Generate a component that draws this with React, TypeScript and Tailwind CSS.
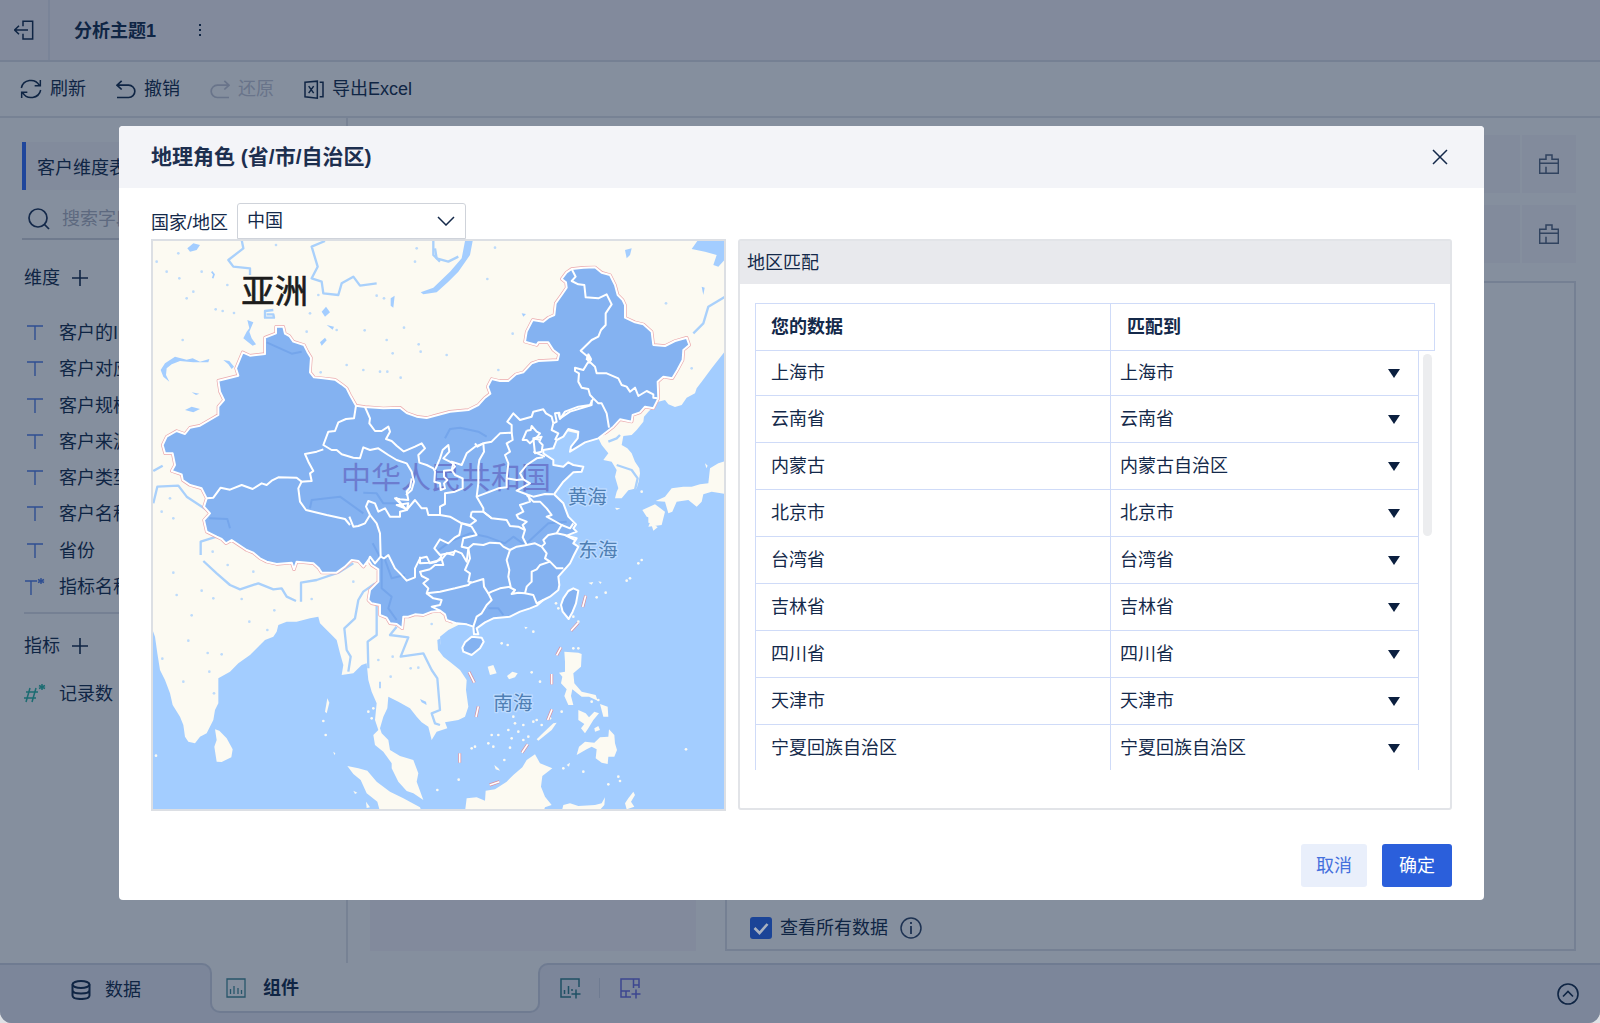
import React from "react";

const rows: [string, string][] = [
  ["上海市", "上海市"],
  ["云南省", "云南省"],
  ["内蒙古", "内蒙古自治区"],
  ["北京市", "北京市"],
  ["台湾省", "台湾省"],
  ["吉林省", "吉林省"],
  ["四川省", "四川省"],
  ["天津市", "天津市"],
  ["宁夏回族自治区", "宁夏回族自治区"],
];

const dimensions = ["客户的ID", "客户对应", "客户规模", "客户来源", "客户类型", "客户名称", "省份", "指标名称"];

const SEA =
  "1728,345 1685,400 1655,440 1640,460 1635,475 1610,488 1595,510 1575,516 1555,508 1545,495 1525,500 1495,530 1482,545 1480,560 1460,585 1445,600 1420,603 1415,630 1432,640 1445,655 1455,680 1468,700 1470,715 1466,740 1460,760 1435,766 1415,790 1395,790 1400,770 1405,760 1395,725 1400,705 1385,680 1360,675 1375,655 1355,630 1345,610 1170,570 1100,900 1000,1100 950,1168 925,1170 895,1185 870,1205 872,1225 865,1245 880,1265 905,1285 930,1305 950,1335 948,1365 955,1415 945,1445 925,1455 885,1462 892,1480 860,1490 845,1515 835,1475 815,1462 800,1445 780,1420 745,1400 715,1385 712,1420 700,1445 690,1480 695,1495 715,1515 720,1545 750,1563 790,1575 805,1615 800,1640 820,1695 790,1675 770,1668 745,1640 725,1600 725,1585 700,1550 675,1530 670,1500 685,1485 675,1455 680,1405 665,1370 655,1335 650,1285 635,1290 610,1315 575,1320 580,1290 570,1255 560,1215 540,1195 510,1165 505,1145 480,1150 440,1160 410,1160 385,1170 380,1190 370,1205 345,1215 330,1230 300,1260 265,1285 240,1310 205,1330 205,1405 195,1425 190,1455 170,1495 150,1505 135,1525 115,1520 105,1505 100,1470 90,1445 68,1410 60,1375 45,1335 30,1305 22,1255 15,1205 0,1165 0,1740 1740,1740 1740,345";

const CHINA =
  "378,275 400,275 405,296 418,303 430,320 462,330 472,350 483,368 480,412 492,427 520,430 555,434 575,448 590,460 600,480 618,512 645,516 700,520 750,518 770,534 800,545 830,549 855,542 900,530 955,525 985,510 1003,490 1021,476 1013,455 1025,432 1050,438 1075,438 1098,418 1120,412 1145,385 1165,378 1223,375 1227,358 1210,345 1195,322 1165,322 1160,330 1125,320 1130,290 1148,255 1180,260 1195,248 1213,240 1217,205 1235,180 1250,158 1248,142 1235,132 1250,112 1265,102 1300,98 1335,97 1355,113 1380,120 1395,150 1403,180 1418,195 1425,210 1425,248 1455,262 1480,268 1505,290 1510,330 1545,333 1575,318 1610,308 1618,330 1600,345 1598,375 1582,405 1567,430 1540,425 1523,440 1525,490 1510,520 1485,515 1470,532 1448,540 1445,560 1410,553 1390,575 1345,610 1305,622 1260,650 1263,635 1283,610 1285,590 1255,582 1240,605 1220,615 1210,640 1180,645 1180,655 1210,675 1210,690 1240,695 1255,682 1270,690 1300,695 1295,710 1270,712 1240,740 1212,778 1240,805 1255,845 1278,868 1270,880 1280,890 1250,902 1280,910 1270,925 1285,935 1272,960 1260,985 1225,1025 1228,1050 1225,1065 1200,1085 1180,1095 1160,1112 1140,1120 1110,1130 1080,1145 1030,1150 1005,1162 980,1180 985,1198 972,1198 970,1175 950,1168 920,1165 890,1155 885,1138 870,1127 845,1130 820,1140 795,1138 775,1145 760,1145 757,1180 740,1167 720,1165 710,1148 690,1140 690,1110 665,1105 655,1095 660,1065 685,1040 685,1003 665,990 655,975 640,995 625,978 605,975 585,995 560,1013 515,1013 505,998 490,985 440,980 432,1003 425,983 380,987 350,980 330,970 310,953 290,945 245,915 228,925 215,912 200,905 170,890 162,855 180,835 162,815 170,790 155,760 120,750 98,735 95,718 65,708 75,690 68,655 45,655 38,630 50,605 80,588 105,597 120,578 150,572 205,540 205,515 222,495 210,470 205,437 265,422 258,400 278,352 300,362 345,357 345,308 378,295";

const PROVINCES: { at: string; lines: string[] }[] = [
  {
    at: "translate(0 0)",
    lines: [
      "170,790 190,788 212,758 240,764 275,750 308,762 335,745 350,750 365,737 385,727 440,728 455,740 445,760 450,800 468,825 530,840 585,852 600,870",
      "452,740 485,738 480,715 490,708 475,680 465,657 500,650 520,643",
      "618,512 612,550 588,552 565,562 555,588 535,590 520,630 545,645 560,645 575,658 610,668 630,670 640,637 660,645 685,640 715,660 740,675 770,685 785,710 792,740 785,765 768,780",
      "645,516 660,550 658,565 675,588 695,588 715,575 720,590 708,612 725,618 740,632 762,650",
    ],
  },
  {
    at: "translate(570 495)",
    lines: [
      "28,350 40,380 55,378 75,370 90,345 110,370 120,400 122,470",
      "215,235 210,262 200,275 205,300 180,298 165,295 180,310 200,330 180,335 180,350 150,350 135,325 115,335 105,310 85,303 78,320 90,345",
      "168,292 195,325 170,315 205,310 200,330 225,300 245,325 260,325 265,345 300,345 330,350 365,370",
      "80,495 90,470 105,490 122,470 132,475 145,465 165,505 180,520 200,542 225,532 225,505 240,475 260,470 270,490 290,485 305,470",
      "365,370 358,405 345,412 325,430 300,418 283,445 300,465 345,455",
      "365,370 395,380 410,405 370,415 365,440 385,445 380,485 365,460 345,452 340,465 320,460 305,478 310,495 285,495 270,508",
      "240,470 240,490 270,488 300,480 305,465",
      "270,508 240,515 245,528 265,538 250,550 265,565 260,580 280,595 305,600 300,615 275,620 300,632",
      "260,580 300,575 345,565 385,555 395,545",
      "385,445 390,475 375,510 390,520 385,545 395,548 430,537 432,560 445,580",
      "385,445 400,432 430,435 450,428 480,430 490,440 510,450 530,440 560,435 585,430 605,440",
      "510,450 500,480 508,510 505,530 512,560 480,565 455,575 445,580 455,600 440,615 425,640 410,650 400,680",
      "505,560 525,570 515,582 535,578 555,580 580,585 590,610 610,600",
      "555,580 560,560 575,545 575,515 590,508 600,495 630,485",
      "605,440 620,460 615,475 630,485 650,505 670,505",
      "605,440 615,430 610,420 625,405 650,400 675,405 705,420",
      "650,400 665,375 620,350 635,345 620,325 600,305 580,305 560,285",
      "560,435 548,412 555,390 548,375 560,365 535,355 530,345 550,335 540,315 570,305 565,285",
      "395,335 430,335 455,355 500,360 510,378 535,380 555,390",
      "395,335 392,350 408,362 390,375 365,370",
      "430,130 432,155 418,180 415,200 415,250 410,290 430,325 430,335 455,355",
      "300,345 300,320 315,312 315,280 345,275 368,265 368,235 345,225 335,210",
      "190,155 225,140 245,130 255,145 235,165 238,188 260,195 280,205 285,215 283,245 300,250 302,270 315,265 312,250 322,240 312,230 312,212 335,210 345,200 335,185 365,195 380,160 405,140 430,130",
      "285,210 300,175 308,150 325,135 328,155 310,175 340,190 335,210",
      "405,130 412,140 430,130 455,125 480,100 515,98 515,75 502,65 520,40 540,60 575,50 580,35 610,28 618,40 635,50 640,70",
      "640,70 650,65 645,40 658,38 660,55 690,35 755,15 755,0",
      "515,98 518,120 500,130 510,155 495,165 505,190 500,235",
      "500,235 500,262 475,265 450,275 410,290",
      "500,235 530,240 550,238 570,250 530,272 565,285 580,290 615,282 640,283",
      "550,238 540,220 560,195 590,175 610,172",
      "640,70 635,90 655,100 645,120",
      "560,92 572,90 575,78 590,95 600,100 590,112 570,130 560,120 548,120 560,92",
      "580,115 605,110 598,125 608,135 605,155 585,160 580,115 600,120",
      "580,155 615,170",
      "700,370 690,385 665,375",
    ],
  },
  {
    at: "translate(855 0)",
    lines: [
      "410,102 422,125 410,138 430,148 448,150 452,187 490,190 515,178 530,208 512,235 512,270 498,285 490,305 470,315 437,347 455,362 468,375 460,385",
      "455,372 460,358 468,372 455,372 480,395 485,415 515,415 550,430 560,450 575,455 585,470 600,458 610,483 635,468 655,478 655,488 668,490",
      "460,380 445,405 420,398 420,408 432,415 430,440 440,458 460,462 465,480 475,490",
      "475,490 465,510 430,515 390,530 375,552 370,535",
      "475,490 490,505 500,505 515,535 522,578",
    ],
  },
];

const ISLANDS: { at: string; shapes: string[] }[] = [
  {
    at: "translate(0 855)",
    shapes: [
      "195,628 208,632 230,655 248,688 244,712 215,726 200,725 193,680 200,660",
      "592,738 625,745 652,752 680,785 720,815 760,835 810,862 815,875 690,875 682,845 650,820 632,780 610,762",
      "532,535 538,548 530,580 525,575",
      "648,845 660,862 650,864",
      "610,812 622,818 615,822",
      "550,695 556,700 553,706",
    ],
  },
  {
    at: "translate(855 855)",
    shapes: [
      "90,875 95,835 125,832 150,842 152,812 180,808 215,785 235,765 262,742 275,720 300,703 315,730 352,745 322,768 318,800 330,830 350,855 330,862 325,875",
      "380,875 385,855 405,850 430,858 480,855 500,850 510,832 508,855 490,875",
      "388,395 430,398 440,402 438,440 415,460 418,490 440,515 460,520 482,525 488,542 462,530 440,530 412,508 408,528 415,555 400,555 388,528 395,508 378,490 382,470 372,458 390,455 390,425",
      "430,570 452,580 462,592 478,575 492,580 475,600 460,625 450,640 438,625 448,612 430,600",
      "495,552 518,560 520,590 505,590",
      "478,625 490,618 495,630 480,635",
      "425,705 432,680 450,665 478,668 495,652 520,650 522,628 538,645 540,670 546,690 538,710 520,710 518,732 500,728 482,715 485,688 470,680 455,688",
      "305,658 325,638 355,610 365,608 350,630 310,662",
      "640,-25 675,-20 672,0 655,12 668,22 655,32 648,10 640,8",
      "460,188 475,186 470,194",
      "490,184 500,186 496,192",
      "216,468 232,455 248,460 240,472 222,478",
      "158,440 175,435 185,460 165,465",
      "268,320 278,322 272,328",
      "178,735 190,745 195,752 182,748",
      "570,850 580,835 595,815 600,825 588,845 598,860 575,868",
      "395,735 405,728 402,740",
    ],
  },
  {
    at: "translate(855 0)",
    shapes: [
      "880,675 850,685 825,700 820,745 795,748 770,755 745,755 710,760 690,785 662,798 690,800 700,835 712,830 725,800 760,795 785,815 800,800 805,778 830,770 880,778",
      "622,825 660,808 690,830 680,870 640,875 650,850 635,845",
      "540,818 556,820 545,825",
      "810,685 818,692 814,700",
    ],
  },
];

const RIVERS: { at: string; lines: string[] }[] = [
  {
    at: "translate(0 0)",
    lines: [
      "275,15 280,40 235,75 250,95 300,100 300,120",
      "525,18 485,35 503,95 485,130 515,140 520,175 565,180 575,145 610,125 630,152 680,145",
      "850,15 850,60 870,80",
      "10,805 22,755 85,752 110,785 178,830",
      "10,708 38,692",
      "370,225 345,228 345,248 372,248 370,238 350,238",
    ],
  },
  {
    at: "translate(855 0)",
    lines: [
      "0,40 5,70 40,80 70,65",
      "870,185 820,215 805,265 775,295",
      "520,620 545,610 555,600",
      "545,690 590,705 608,730 600,765",
    ],
  },
  {
    at: "translate(0 855)",
    lines: [
      "200,50 152,65 152,105",
      "160,123 200,160 240,195 270,208 325,190 370,208 395,205 410,230 438,243",
      "453,245 453,188 500,180 565,158 610,130",
      "675,190 640,215 625,240 615,295 583,325 590,390 602,410 595,455",
      "680,255 680,345 653,365 655,445",
      "740,320 720,345 775,352 752,410 820,400 845,450 862,475 870,570 845,580 855,610 870,615",
    ],
  },
];

const DASHES = [
  "M1307 1082L1298 1116",
  "M1285 1163L1263 1187",
  "M1233 1237L1220 1261",
  "M1205 1317V1348",
  "M1206 1423L1193 1455",
  "M1133 1528L1116 1553",
  "M1048 1640L1019 1650",
  "M929 1555V1583",
  "M985 1414L978 1446",
  "M957 1311L973 1343",
];

const SPECKS: [number, number][] = [
  [20, 80], [50, 110], [85, 55], [88, 130], [130, 170], [110, 190], [155, 110], [232, 150], [197, 223], [218, 228], [252, 234], [378, 30], [470, 290], [560, 285], [644, 286], [762, 278], [710, 315], [806, 328], [812, 350], [728, 355], [590, 390], [640, 405], [690, 410], [712, 410], [752, 428], [512, 412], [98, 315], [60, 790], [35, 830], [70, 850], [480, 235], [505, 180], [680, 182], [702, 190], [800, 40], [795, 80], [1035, 38], [1012, 132], [1088, 296], [890, 360], [1045, 405], [1548, 205], [1625, 400], [70, 1013], [80, 1080], [155, 1067], [190, 1090], [275, 1092], [188, 950], [233, 990], [310, 1010], [125, 1141], [115, 1217], [37, 1271], [298, 1160], [373, 1126], [173, 1254], [215, 1258], [178, 1310], [100, 1340], [192, 1375], [352, 1185], [610, 1040], [685, 1275], [728, 1265], [782, 1300], [805, 1298], [722, 1325], [845, 1167], [485, 1092],
];

const REEFS: [number, number][] = [
  [1090, 1445], [1095, 1465], [1120, 1470], [1150, 1460], [1160, 1455], [1075, 1485], [1045, 1500], [1025, 1500], [1015, 1525], [975, 1535], [965, 1540], [1030, 1535], [1080, 1538], [1085, 1510], [1120, 1515], [1105, 1490], [1175, 1470], [1200, 1450], [1235, 1430], [1063, 1575], [1135, 1505], [1170, 1340], [1145, 1312], [1055, 1225], [1073, 1230], [1150, 1190], [1340, 1087], [1367, 1073], [1430, 1037], [1440, 1030], [1465, 985], [1475, 975], [1218, 1105], [1225, 1120], [1270, 1145], [1285, 1160], [1300, 1610], [926, 1634], [520, 1458], [527, 1500], [655, 1430], [670, 1420], [665, 1450], [1608, 1543], [1405, 1625], [1410, 1638], [1375, 1648], [1240, 1600], [18, 1562], [862, 1665], [1325, 1400], [1345, 1395], [1270, 1240], [1285, 1240], [1475, 770], [465, 1120], [480, 1130],
];

function ChinaMap() {
  return (
    <svg viewBox="9 18 1713 1704" preserveAspectRatio="xMidYMid slice" className="block h-full w-full" role="img" aria-label="中国地图">
      <rect x="0" y="0" width="1740" height="1740" fill="#fcfaf2" />
      <polygon points={SEA} fill="#a3cdff" />
      <g fill="none" stroke="#a9d0fb" strokeWidth="7" strokeLinejoin="round">
        {RIVERS.map((g) => (
          <g key={g.at} transform={g.at}>
            {g.lines.map((l) => (
              <polyline key={l} points={l} />
            ))}
          </g>
        ))}
      </g>
      <g fill="#a3cdff">
        <polygon points="945,18 968,18 960,60 925,110 895,140 860,172 820,178 812,172 850,158 900,110 935,70" />
        <polygon points="1642,18 1728,18 1728,70 1705,95 1690,90 1700,60 1665,50 1625,42" />
        <polygon points="60,375 75,365 110,374 128,370 150,380 178,372 175,382 130,382 90,378 65,388 50,400 48,420 58,440 40,425 32,405 45,385" />
        <polygon points="220,375 238,378 252,395 245,402 235,388" />
        <polygon points="105,525 125,515 150,522 130,532" />
        <polygon points="125,472 148,476 138,480" />
        <polygon points="292,255 310,262 298,290 305,310 318,328 308,332 290,318 280,310 290,290 298,280" />
        <polygon points="515,230 528,215 540,232 525,245" />
        <polygon points="722,190 734,182 730,218 722,212" />
        <polygon points="112,40 130,25 150,30 140,45 120,50" />
        <polygon points="530,270 552,275 548,284" />
        <polygon points="510,322 525,308 530,316 515,332" />
        <polygon points="1425,45 1445,40 1440,60 1430,70" />
        <polygon points="1115,235 1128,237 1120,245" />
        <polygon points="1655,155 1664,158 1660,180" />
        <polygon points="810,1392 828,1400 830,1410 815,1402" />
        <polygon points="862,1215 872,1210 872,1250 864,1245" />
        <path d="M185 110L192 118L188 130M690 1340V1360" fill="none" stroke="#a3cdff" strokeWidth="5" />
        {SPECKS.map(([x, y]) => (
          <circle key={x + "-" + y} cx={x} cy={y} r="4" opacity="0.7" />
        ))}
      </g>
      <g fill="#fcfaf2">
        {ISLANDS.map((g) => (
          <g key={g.at} transform={g.at}>
            {g.shapes.map((s) => (
              <polygon key={s} points={s} />
            ))}
          </g>
        ))}
        {REEFS.map(([x, y]) => (
          <circle key={x + "-" + y} cx={x} cy={y} r="4" />
        ))}
      </g>
      <clipPath id="inland">
        <polygon points="0,0 1740,0 1740,480 1345,606 1150,540 1100,900 900,1175 0,1240" />
      </clipPath>
      <polygon points={CHINA} fill="none" stroke="#eba9ac" strokeWidth="10" strokeLinejoin="round" clipPath="url(#inland)" />
      <polygon points={CHINA} fill="#84b2f1" />
      <g fill="none" stroke="#74a5eb" strokeWidth="6" strokeLinejoin="round">
        <polyline points="350,322 390,340 425,356 455,350" />
        <polyline points="178,850 232,852 240,880" />
        <polyline points="480,820 485,795 570,785 640,835" />
        <polyline points="640,773 680,775 700,805 770,805" />
        <polyline points="885,610 900,582 930,578 985,590 1010,605" />
        <polyline points="668,925 695,975 695,1060 725,1085 715,1120 740,1155" />
        <polyline points="700,960 725,1030 765,1020" />
        <polyline points="860,950 900,920 960,895 1010,905 1065,925 1090,905 1125,930 1195,865 1250,860" />
        <polyline points="1015,1120 1045,1120 1060,1140" />
      </g>
      <text x="573" y="759" fontSize="90" fill="#6c7ccf">中华人民共和国</text>
      <g fill="none" stroke="#ffffff" strokeWidth="6" strokeLinejoin="round">
        <polygon points={CHINA} />
        {PROVINCES.map((g) => (
          <g key={g.at} transform={g.at}>
            {g.lines.map((l) => (
              <polyline key={l} points={l} />
            ))}
          </g>
        ))}
        <polygon fill="#84b2f1" points="937,1238 945,1222 965,1205 995,1208 1001,1220 990,1240 965,1260 940,1250" />
        <polygon fill="#84b2f1" points="1233,1110 1240,1090 1255,1068 1270,1060 1285,1067 1278,1105 1268,1130 1256,1152 1238,1130" />
      </g>
      <g fill="none" strokeLinecap="butt">
        {DASHES.map((d) => (
          <g key={d}>
            <path d={d} stroke="#d98e9d" strokeWidth="9" />
            <path d={d} stroke="#ffffff" strokeWidth="5" />
          </g>
        ))}
      </g>
      <text x="274" y="204" fontSize="100" fill="#1c1c1c" stroke="#1c1c1c" strokeWidth="2">亚洲</text>
      <g fontSize="59" fill="#4f7fb4" stroke="#bddbff" strokeWidth="8" paintOrder="stroke" strokeLinejoin="round">
        <text x="1253" y="806">黄海</text>
        <text x="1285" y="965">东海</text>
        <text x="1030" y="1424">南海</text>
      </g>
    </svg>
  );
}

function BrushIcon() {
  return (
    <svg viewBox="0 0 60 60" className="size-5" fill="none" stroke="#30435f" strokeWidth="4.5">
      <path d="M2 58V16H21V3H39V16H58V58ZM2 28H58M21 38V58" />
    </svg>
  );
}

function StyleSlot() {
  return (
    <div className="flex h-[58px] gap-[2px]">
      <div className="flex-1 bg-[#828b9c]" />
      <button aria-label="清空" className="flex w-[54px] items-center justify-center bg-[#828b9c]">
        <BrushIcon />
      </button>
    </div>
  );
}

function TIcon({ star }: { star?: boolean }) {
  return (
    <svg viewBox="0 0 22 20" className="h-5 w-[22px] shrink-0" fill="none" stroke="#2f4f92" strokeWidth="1.4">
      {star ? <path d="M1 4H13M7 4V18M17 1V7M14 2.5L20 5.5M20 2.5L14 5.5" /> : <path d="M3 3H19M11 3V17" />}
    </svg>
  );
}

export default function App() {
  return (
    <div className="min-h-screen bg-[#dfe1e5] text-[18px] leading-6 text-[#0f2544] font-['Liberation_Sans','Noto_Sans_CJK_SC',sans-serif]">
      <div className="flex min-h-screen flex-col overflow-hidden rounded-b-xl bg-[#858f9e]">
        <header className="flex h-[62px] items-stretch border-b-2 border-[#758093] bg-[#828a9c]">
          <button aria-label="退出" className="flex w-[50px] items-center justify-center border-r-2 border-[#7a8498]">
            <svg viewBox="0 0 60 60" className="size-5" fill="none" stroke="#0f2544" strokeWidth="4.5">
              <path d="M27 19V4H56V57H27V41M2 30H42M15 17L2 30L15 43" />
            </svg>
          </button>
          <h1 className="flex items-center pl-6 pt-[2px] font-bold">分析主题1</h1>
          <button aria-label="更多" className="ml-[30px] flex w-7 items-center justify-center">
            <svg viewBox="0 0 4 14" className="h-[14px] w-1" fill="#0f2544">
              <rect x="1" y="1" width="2" height="2" />
              <rect x="1" y="6" width="2" height="2" />
              <rect x="1" y="11" width="2" height="2" />
            </svg>
          </button>
        </header>

        <div className="flex h-14 items-center gap-[30px] border-b-2 border-[#778294] px-5">
          <button className="flex items-center gap-2">
            <svg viewBox="0 0 64 60" className="h-5 w-[22px]" fill="none" stroke="#0f2544" strokeWidth="4.5">
              <path d="M3 27A29 28 0 0 1 57 19M60 3V20H43M61 33A29 28 0 0 1 7 41M4 57V40H21" />
            </svg>
            刷新
          </button>
          <button className="flex items-center gap-2">
            <svg viewBox="0 0 60 56" className="h-[19px] w-5" fill="none" stroke="#0f2544" strokeWidth="5">
              <path d="M17 2L3 15L17 28M4 15H38A18 18 0 0 1 38 52H3" />
            </svg>
            撤销
          </button>
          <button className="flex items-center gap-2 text-[#69748a]">
            <svg viewBox="0 0 60 56" className="h-[19px] w-5" fill="none" stroke="#69748a" strokeWidth="5">
              <path d="M43 2L57 15L43 28M56 15H22A18 18 0 0 0 22 52H57" />
            </svg>
            还原
          </button>
          <button className="flex items-center gap-2">
            <svg viewBox="0 0 60 56" className="h-[19px] w-5" fill="none" stroke="#0f2544" strokeWidth="4.5">
              <path d="M3 6L40 3V54L3 50ZM47 6H57V50H47M14 18L29 39M29 18L14 39" />
            </svg>
            导出Excel
          </button>
        </div>

        <div className="flex flex-1">
          <aside className="w-[348px] border-r-2 border-[#778294] pt-6">
            <div className="ml-[22px] mr-5 flex h-12 items-center border-l-4 border-[#1f469b] bg-[#828b9c] pl-[11px] pt-[3px]">客户维度表</div>
            <label className="ml-[22px] mr-5 mt-[10px] flex h-10 items-center gap-3 border-b-2 border-[#6f7a8d] pl-1.5">
              <svg viewBox="0 0 22 22" className="size-[22px] shrink-0" fill="none" stroke="#14294a" strokeWidth="1.7">
                <circle cx="10" cy="10" r="9" />
                <path d="M16.5 16.5L21 21" />
              </svg>
              <input aria-label="搜索" placeholder="搜索字段" className="min-w-0 flex-1 bg-transparent outline-none placeholder:text-[#5d697f]" />
            </label>
            <div className="ml-6 mt-[26px] flex items-center gap-3">
              维度
              <button aria-label="添加维度">
                <svg viewBox="0 0 16 16" className="size-4" stroke="#0f2544" strokeWidth="1.6"><path d="M8 0V16M0 8H16" /></svg>
              </button>
            </div>
            <ul className="ml-6 mr-5 mt-[25px] grid h-[299px] auto-rows-fr border-b-2 border-[#758093] pb-[7px]">
              {dimensions.map((d, i) => (
                <li key={d} className="flex items-center gap-[13px]">
                  <TIcon star={i === 7} />
                  {d}
                </li>
              ))}
            </ul>
            <div className="ml-6 mt-5 flex items-center gap-3">
              指标
              <button aria-label="添加指标">
                <svg viewBox="0 0 16 16" className="size-4" stroke="#0f2544" strokeWidth="1.6"><path d="M8 0V16M0 8H16" /></svg>
              </button>
            </div>
            <div className="ml-6 mt-6 flex items-center gap-[13px]">
              <svg viewBox="0 0 22 20" className="h-5 w-[22px]" fill="none" stroke="#1c6c72" strokeWidth="1.5">
                <path d="M6 4L2 18M12 4L8 18M2 8H14M0 14H12M18 0V6M15 1.5L21 4.5M21 1.5L15 4.5" />
              </svg>
              记录数
            </div>
          </aside>

          <main className="flex flex-1 gap-[29px] pb-3 pl-[22px] pr-6 pt-[17px]">
            <div className="w-[326px] bg-[#828a9c]" />
            <div className="flex flex-1 flex-col">
              <StyleSlot />
              <div className="h-3" />
              <StyleSlot />
              <div className="mt-[18px] flex flex-1 flex-col justify-end border-2 border-[#758093] px-[23px] pb-[9px]">
                <div className="flex items-center gap-3">
                  <label className="flex items-center gap-2">
                    <span className="grid size-[22px] place-items-center">
                      <input type="checkbox" defaultChecked className="size-[22px] appearance-none rounded-[3px] bg-[#1b4497] [grid-area:1/1]" />
                      <svg viewBox="0 0 22 22" className="pointer-events-none size-[22px] [grid-area:1/1]" fill="none" stroke="#a9b2c0" strokeWidth="2.6">
                        <path d="M4.500 11L9.500 16L17.500 7" />
                      </svg>
                    </span>
                    查看所有数据
                  </label>
                  <svg viewBox="0 0 22 22" className="size-[22px]" fill="none" stroke="#1d3252" strokeWidth="1.5">
                    <circle cx="11" cy="11" r="10" />
                    <path d="M11 5V7M11 9V17" strokeWidth="1.8" />
                  </svg>
                </div>
              </div>
            </div>
          </main>
        </div>

        <footer className="grid h-[60px] bg-[#7c869a]">
          <div className="flex [grid-area:1/1]" aria-hidden="true">
            <div className="h-5 w-[212px] bg-[#858f9e]">
              <div className="h-5 rounded-tr-[10px] border-r-2 border-t-2 border-[#6f7b91] bg-[#7c869a]" />
            </div>
            <div className="-ml-[2px] w-[330px]">
              <div className="ml-[2px] mr-[2px] h-5 bg-[#858f9e]" />
              <div className="h-[30px] rounded-b-[10px] border-x-2 border-b-2 border-[#6f7b91] bg-[#858f9e]" />
            </div>
            <div className="-ml-[2px] h-5 flex-1 bg-[#858f9e]">
              <div className="h-5 rounded-tl-[10px] border-l-2 border-t-2 border-[#6f7b91] bg-[#7c869a]" />
            </div>
          </div>
          <nav className="flex items-start [grid-area:1/1]">
            <button className="flex h-[53px] w-[211px] items-center gap-[14px] pl-[71px]">
              <svg viewBox="0 0 20 20" className="size-5" fill="none" stroke="#0f2544" strokeWidth="2">
                <ellipse cx="10" cy="4.500" rx="8.500" ry="3.500" />
                <path d="M1.500 4.500V15.500C1.500 20.200 18.500 20.200 18.500 15.500V4.500M1.500 10C1.500 14.700 18.500 14.700 18.500 10" />
              </svg>
              数据
            </button>
            <button className="flex h-[50px] w-[328px] items-center gap-[17px] pl-[15px] font-bold">
              <svg viewBox="0 0 20 20" className="size-5" fill="none" stroke="#27566a" strokeWidth="1.300">
                <path d="M1 1H19V19H1ZM4.500 16V11M8 16V8M12 16V10M15.500 16V12" />
              </svg>
              组件
            </button>
            <div className="flex h-[50px] flex-1 items-center gap-[18px] pl-5">
              <button aria-label="添加组件">
                <svg viewBox="0 0 22 22" className="size-[22px]" fill="none" stroke="#1f5064" strokeWidth="1.500">
                  <path d="M20 10V2H2V20H12M5.500 17V13M9.500 17V9M13 14V12M17 12.500V21.500M12.500 17H21.500" />
                </svg>
              </button>
              <span className="h-5 w-px bg-[#6f7b91]" />
              <button aria-label="添加仪表板" className="ml-px">
                <svg viewBox="0 0 22 22" className="size-[22px]" fill="none" stroke="#3d4790" strokeWidth="1.500">
                  <path d="M20 11V2H2V20H12M14.500 2V11M14.500 8H20M2 14H11M7 14V20M17 12.500V21.500M12.500 17H21.500" />
                </svg>
              </button>
            </div>
            <button aria-label="展开" className="mr-[21px] mt-5">
              <svg viewBox="0 0 22 22" className="size-[22px]" fill="none" stroke="#0f2544" strokeWidth="1.600">
                <circle cx="11" cy="11" r="10" />
                <path d="M6 13.500L11 8.500L16 13.500" />
              </svg>
            </button>
          </nav>
        </footer>
      </div>

      <div className="fixed inset-0 pl-[119px] pr-[116px] pt-[126px]">
        <section role="dialog" aria-label="地理角色" className="overflow-hidden rounded-sm bg-white pb-[13px] text-[#14294a]">
          <div className="flex h-[62px] items-center justify-between bg-[#f3f4f8] pl-8 pr-[35px]">
            <h2 className="text-[21px] font-bold text-[#1d2f4f]">地理角色 (省/市/自治区)</h2>
            <button aria-label="关闭">
              <svg viewBox="0 0 18 18" className="size-[18px]" stroke="#14294a" strokeWidth="1.500"><path d="M2 2L16 16M16 2L2 16" /></svg>
            </button>
          </div>
          <div className="pl-8 pr-8 pt-[15px]">
            <div className="flex items-center gap-[9px]">
              <label htmlFor="country" className="pt-[3px]">国家/地区</label>
              <div className="grid h-9 w-[229px] items-center rounded-t-[3px] border border-[#cfd3da]">
                <select id="country" className="h-full w-full appearance-none bg-transparent px-[9px] outline-none [grid-area:1/1]">
                  <option>中国</option>
                </select>
                <svg viewBox="0 0 18 10" className="pointer-events-none mr-[10px] h-[10px] w-[18px] justify-self-end [grid-area:1/1]" fill="none" stroke="#14294a" strokeWidth="1.500">
                  <path d="M1 1L9 9L17 1" />
                </svg>
              </div>
            </div>
            <div className="flex items-start gap-3">
              <div className="h-[572px] w-[575px] border-2 border-[#dcdfe4]">
                <ChinaMap />
              </div>
              <div className="h-[571px] flex-1 rounded-[3px] border-2 border-[#e2e4e8]">
                <h3 className="flex h-[43px] items-center bg-[#e8e9ed] px-[7px]">地区匹配</h3>
                <div className="px-[15px] pt-[19px]">
                  <table className="w-full table-fixed border-collapse">
                    <thead>
                      <tr className="h-[47px] text-left">
                        <th className="w-[355px] border border-[#cfdbf8] pl-[15px]">您的数据</th>
                        <th className="border border-[#cfdbf8] pl-4">匹配到</th>
                      </tr>
                    </thead>
                  </table>
                  <div className="-mt-px flex h-[420px] gap-1 overflow-hidden">
                    <table className="h-max min-w-0 flex-1 table-fixed border-collapse">
                      <tbody>
                        {rows.map(([a, b]) => (
                          <tr key={a} className="h-[47px] first:h-[45px]">
                            <td className="w-[355px] border border-[#cfdbf8] pl-[15px]">{a}</td>
                            <td className="border border-[#cfdbf8] p-0">
                              <div className="grid items-center">
                                <select aria-label={a} className="w-full appearance-none bg-transparent pl-[9px] outline-none [grid-area:1/1]">
                                  <option>{b}</option>
                                </select>
                                <svg viewBox="0 0 12 9" className="pointer-events-none mr-[18px] h-[9px] w-3 justify-self-end [grid-area:1/1]" fill="#0b1f3f">
                                  <path d="M0 0H12L6 9Z" />
                                </svg>
                              </div>
                            </td>
                          </tr>
                        ))}
                      </tbody>
                    </table>
                    <div className="mr-[3px] mt-1 h-[182px] w-[9px] rounded-full bg-[#ecedef]" />
                  </div>
                </div>
              </div>
            </div>
            <div className="mt-[33px] flex justify-end gap-[15px]">
              <button className="h-[43px] w-[66px] rounded-[3px] bg-[#e9effb] text-[#4470dd]">取消</button>
              <button className="h-[43px] w-[70px] rounded-[3px] bg-[#2b5fdb] text-white">确定</button>
            </div>
          </div>
        </section>
      </div>
    </div>
  );
}
